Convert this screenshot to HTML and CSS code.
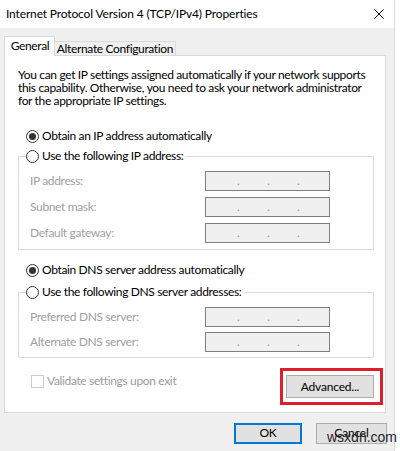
FILE: index.html
```html
<!DOCTYPE html>
<html lang="en">
  <head>
    <meta charset="UTF-8" />
    <meta name="viewport" content="width=device-width, initial-scale=1.0" />
    <title>Internet Protocol Version 4 (TCP/IPv4) Properties</title>
    <link rel="stylesheet" href="styles.css">
  </head>
  <body>
    <div class="dialog">
      <div class="titlebar">
        <span class="title">Internet Protocol Version 4 (TCP/IPv4) Properties</span>
        <span class="close">
          <svg width="10" height="10" viewBox="0 0 10 10">
            <path d="M0.5 0.5 L9.5 9.5 M9.5 0.5 L0.5 9.5" stroke="#000" stroke-width="1" fill="none" />
          </svg>
        </span>
      </div>
      <div class="content">
        <div class="tabs">
          <div class="tab active">General</div>
          <div class="tab">Alternate Configuration</div>
        </div>
        <div class="panel">
          <p class="intro">
            You can get IP settings assigned automatically if your network supports<br>
            this capability. Otherwise, you need to ask your network administrator<br>
            for the appropriate IP settings.
          </p>

          <div class="radio checked ip-auto"><span class="dot"></span>Obtain an IP address automatically</div>
          <fieldset class="group">
            <legend><div class="radio"><span class="dot"></span>Use the following IP address:</div></legend>
            <div class="field"><span class="label">IP address:</span><span class="ipbox"><i>.</i><i>.</i><i>.</i></span></div>
            <div class="field"><span class="label">Subnet mask:</span><span class="ipbox"><i>.</i><i>.</i><i>.</i></span></div>
            <div class="field"><span class="label">Default gateway:</span><span class="ipbox"><i>.</i><i>.</i><i>.</i></span></div>
          </fieldset>

          <div class="radio checked dns-auto"><span class="dot"></span>Obtain DNS server address automatically</div>
          <fieldset class="group group-dns">
            <legend><div class="radio"><span class="dot"></span>Use the following DNS server addresses:</div></legend>
            <div class="field"><span class="label">Preferred DNS server:</span><span class="ipbox"><i>.</i><i>.</i><i>.</i></span></div>
            <div class="field"><span class="label">Alternate DNS server:</span><span class="ipbox"><i>.</i><i>.</i><i>.</i></span></div>
          </fieldset>

          <div class="panel-footer">
            <div class="check"><span class="box"></span>Validate settings upon exit</div>
            <div class="highlight"><button class="btn advanced">Advanced...</button></div>
          </div>
        </div>
        <div class="actions">
          <button class="btn default">OK</button>
          <button class="btn">Cancel</button>
        </div>
      </div>
      <span class="watermark">wsxdn.com</span>
    </div>
  </body>
</html>
```
FILE: styles.css
```css
html,
body {
  height: 100%;
  margin: 0;
}
body {
  background: #fff;
  font-family: Lato, "Noto Sans", sans-serif;
  font-size: 12px;
  line-height: 16px;
  color: #000;
}
.dialog {
  position: relative;
  box-sizing: border-box;
  width: 395px;
  height: 451px;
  background: #f0f0f0;
  border-right: 1px solid #dadada;
}
.titlebar {
  display: flex;
  align-items: center;
  justify-content: space-between;
  height: 28px;
  padding: 0 10px 0 6px;
  background: #fff;
}
.title {
  white-space: nowrap;
  letter-spacing: -0.15px;
}
.close svg {
  display: block;
}
.content {
  padding: 8px 8px 0 4px;
}
.tabs {
  display: flex;
  align-items: flex-end;
  height: 19px;
  letter-spacing: -0.35px;
}
.tab {
  box-sizing: border-box;
  border: 1px solid #d9d9d9;
  border-bottom: none;
  text-align: center;
  white-space: nowrap;
}
.tab.active {
  position: relative;
  z-index: 1;
  width: 51px;
  height: 20px;
  margin-bottom: -1px;
  padding-left: 1px;
  line-height: 18px;
  background: #fff;
}
.tab:not(.active) {
  width: 121px;
  height: 14px;
  border-left: none;
  line-height: 13px;
}
.panel {
  box-sizing: border-box;
  height: 358px;
  padding: 0 11px 0 13px;
  background: #fff;
  border: 1px solid #d9d9d9;
  letter-spacing: -0.35px;
}
.intro {
  margin: 12px 0 0;
  line-height: 13px;
  white-space: nowrap;
}
.radio {
  display: flex;
  align-items: center;
  height: 20px;
  margin-left: 8px;
  white-space: nowrap;
}
.radio .dot {
  box-sizing: border-box;
  display: flex;
  align-items: center;
  justify-content: center;
  width: 13px;
  height: 13px;
  margin-right: 3px;
  border: 1px solid #333;
  border-radius: 50%;
  background: #fff;
}
.radio.checked .dot::after {
  content: "";
  width: 7px;
  height: 7px;
  border-radius: 50%;
  background: #333;
}
.radio.ip-auto {
  margin-top: 19px;
}
.radio.dns-auto {
  margin-top: 10px;
}
.group {
  margin: 0;
  padding: 5px 10px 6px 7px;
  border: 1px solid #dcdcdc;
}
.group legend {
  padding: 0 2px 0 0;
}
.group legend .radio {
  margin-left: 0;
}
.group-dns {
  margin-top: 2px;
  padding-bottom: 5px;
}
.field {
  display: flex;
  align-items: center;
  height: 20px;
  padding-left: 4px;
  color: #a0a0a0;
}
.field + .field {
  margin-top: 6px;
}
.group-dns .field + .field {
  margin-top: 5px;
}
.label {
  width: 175px;
}
.ipbox {
  box-sizing: border-box;
  display: flex;
  width: 125px;
  height: 20px;
  padding-left: 31px;
  border: 1px solid #7f7f7f;
  background: #f0f0f0;
  line-height: 18px;
}
.ipbox i {
  width: 30px;
  font-style: normal;
  color: #9a9a9a;
}
.panel-footer {
  display: flex;
  justify-content: space-between;
  margin-top: 10px;
  margin-right: -9px;
}
.check {
  display: flex;
  align-items: center;
  height: 16px;
  margin: 5px 0 0 13px;
  color: #9b9b9b;
}
.check .box {
  box-sizing: border-box;
  width: 13px;
  height: 13px;
  margin-right: 3px;
  border: 1px solid #cccccc;
}
.highlight {
  padding: 4px 6px 4px 3px;
  border: 3px solid #dc1f2b;
}
.btn {
  box-sizing: border-box;
  height: 21px;
  padding: 0;
  border: 1px solid #adadad;
  background: #e1e1e1;
  font-family: inherit;
  font-size: 12px;
  letter-spacing: -0.2px;
  color: #000;
}
.btn.advanced {
  display: block;
  width: 88px;
  height: 23px;
}
.actions {
  display: flex;
  justify-content: flex-end;
  gap: 14px;
  margin: 10px -1px 0 0;
}
.actions .btn {
  width: 71px;
  padding-bottom: 2px;
}
.actions .btn.default {
  width: 68px;
  border: 2px solid #0078d7;
}
.watermark {
  position: absolute;
  left: 327px;
  top: 429px;
  font-family: "Liberation Sans", Arial, sans-serif;
  font-size: 14px;
  line-height: 16px;
  color: #1e1e1e;
}
```
